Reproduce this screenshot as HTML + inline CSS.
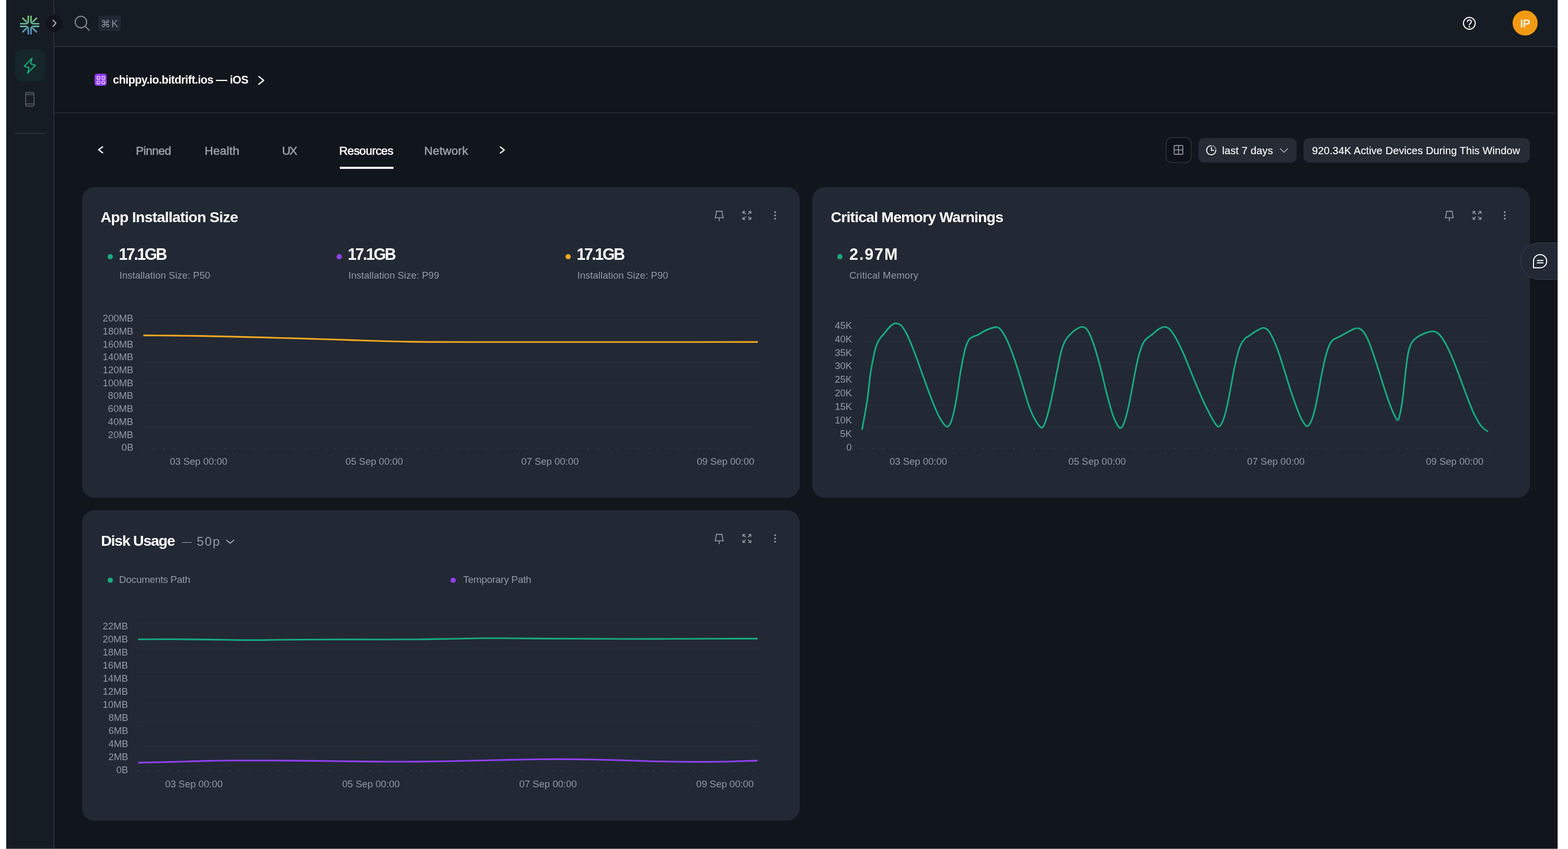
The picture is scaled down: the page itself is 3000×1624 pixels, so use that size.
<!DOCTYPE html>
<html lang="en"><head><meta charset="utf-8"><title>bitdrift - Resources</title>
<style>
*{box-sizing:border-box}
html,body{margin:0;padding:0}
body{width:3000px;height:1624px;overflow:hidden;background:#fff;font-family:'Liberation Sans',Arial,Helvetica,sans-serif;-webkit-font-smoothing:antialiased}
#app{position:absolute;left:12px;top:0;width:2968px;height:1623px;background:#11151c;overflow:hidden;will-change:transform;box-shadow:0 0 1.6px rgba(0,0,0,.6)}
#app div,#app aside,#app header,#app main,#app nav,#app section,#app button,#app span.t,#app svg.i,#app a{position:absolute;display:block;margin:0;padding:0}
#app button{border:0;background:none;font:inherit;color:inherit}
span.t{white-space:pre;font-kerning:normal}
svg.i{overflow:visible}
.edge{position:absolute;left:12px;top:1622.6px;width:2968px;height:1.4px;background:#707379}
.card{background:#222934;border-radius:24px}
.ico{fill:none;stroke:#9aa1a9;stroke-width:1.6;stroke-linecap:round;stroke-linejoin:round}
</style></head>
<body>
<div id="app">
<aside class="sidebar" style="left:0px;top:0px;width:91px;height:1623px;background:#161c23;border-right:2px solid #272e38;width:92px"><svg class="i" style="left:22px;top:26px" width="46" height="44" viewBox="34 26 46 44" ><defs><linearGradient id="lg" gradientUnits="userSpaceOnUse" x1="0" y1="29" x2="0" y2="67"><stop offset="0" stop-color="#86cf74"/><stop offset=".45" stop-color="#63b59a"/><stop offset="1" stop-color="#5a8ad6"/></linearGradient></defs><path d="M54.10 29.95V39.95Q54.10 45.35 48.70 45.35H38.20M42.70 34.05L51.10 42.25M54.10 65.95V55.95Q54.10 50.55 48.70 50.55H38.20M42.70 61.85L51.10 53.65M59.30 29.95V39.95Q59.30 45.35 64.70 45.35H75.20M70.70 34.05L62.30 42.25M59.30 65.95V55.95Q59.30 50.55 64.70 50.55H75.20M70.70 61.85L62.30 53.65" fill="none" stroke="url(#lg)" stroke-width="2.9"/></svg>
<div class="nav-active" style="left:16.5px;top:95px;width:57.5px;height:59.5px;background:#16272b;border-radius:14px"></div>
<svg class="i" style="left:28px;top:105px" width="34" height="42" viewBox="40 105 34 42" ><path d="M61.3 111.5L46.5 126.6L55.7 129.6L52.7 140.1L67.7 124.7L58.5 121.9Z" fill="none" stroke="#18ab80" stroke-width="2.2" stroke-linejoin="round"/></svg>
<svg class="i" style="left:32px;top:172px" width="26" height="36" viewBox="44 172 26 36" ><g fill="none" stroke="#50565f" stroke-width="2"><rect x="49.1" y="177" width="15.9" height="25.9" rx="2.8"/><path d="M49.1 180.8H65M49.1 198.7H65"/></g></svg>
<div style="left:16px;top:254px;width:59px;height:2px;background:#2a303a"></div>
</aside>
<header class="topbar" style="left:92px;top:0px;width:2876px;height:90px;background:#161c23;border-bottom:2px solid #2a303a"><svg class="i" style="left:36px;top:28px" width="36" height="36" viewBox="140 28 36 36" ><g fill="none" stroke="#7f858e" stroke-width="2.2" stroke-linecap="round"><circle cx="154.85" cy="42.2" r="11"/><path d="M162.8 50.1L170.6 58"/></g></svg>
<div class="kbd" style="left:83.7px;top:30.4px;width:43.3px;height:28.8px;background:#222833;border-radius:3.5px;border-bottom:1.2px solid #2a313b"><span class="t" style="left:5.20px;top:6.6px;font-size:18.5px;line-height:18.5px;color:#8a9099;font-family:'DejaVu Sans', 'Liberation Sans', sans-serif">⌘</span><span class="t" style="left:25.20px;top:4.6px;font-size:20px;line-height:20px;color:#8a9099">K</span></div>
<svg class="i" style="left:2693px;top:30px" width="30" height="30" viewBox="2797 30 30 30" ><g fill="none" stroke="#fff" stroke-width="2" stroke-linecap="round"><circle cx="2811.2" cy="44.6" r="11.3"/><path d="M2807.6 41.6a3.7 3.7 0 1 1 5.6 3.2c-1.3.8-2 1.5-2 2.9"/></g><circle cx="2811.2" cy="51.2" r="1.5" fill="#fff"/></svg>
<div class="avatar" style="left:2790px;top:20.3px;width:48px;height:48px;background:#f39a13;border-radius:50%"><span class="t" style="left:14.20px;top:13.7px;font-size:21px;line-height:21px;color:#ffffff;-webkit-text-stroke:0.6px">IP</span></div>
</header>
<button class="collapse" style="left:75.9px;top:28.1px;width:32.6px;height:32.6px;background:#11141a;border-radius:50%"><svg class="i" style="left:0px;top:0px" width="32.6" height="32.6" viewBox="87.9 28.1 32.6 32.6" ><path d="M101.3 38.6L106.9 44.65L101.3 50.7" fill="none" stroke="#a4a8af" stroke-width="2.2" stroke-linecap="round" stroke-linejoin="round"/></svg>
</button>
<div class="approw" style="left:92px;top:90px;width:2876px;height:127px;border-bottom:2px solid #262b34"><div class="appicon" style="left:76.6px;top:50.6px;width:23.8px;height:23.8px;background:#8f3ff2;border-radius:4.5px"><svg class="i" style="left:0px;top:0px" width="23.8" height="23.8" viewBox="180.6 140.6 23.8 23.8" ><g fill="none" stroke="#f6d9ff" stroke-width="1.4"><rect x="185.3" y="145.9" width="5.2" height="5.2" rx=".8"/><rect x="185.3" y="154.7" width="5.2" height="5.2" rx=".8"/><rect x="194.7" y="145.9" width="5.2" height="5.2" rx=".8"/><rect x="194.7" y="154.7" width="5.2" height="5.2" rx=".8"/></g></svg>
</div>
<span class="t" style="left:112.00px;top:53px;font-size:21.5px;line-height:21.5px;color:#ffffff;font-weight:700;letter-spacing:-0.544px">chippy.io.bitdrift.ios — iOS</span><svg class="i" style="left:384px;top:50px" width="24" height="28" viewBox="488 140 24 28" ><path d="M495.2 146.4L504.6 153.7L495.2 161" fill="none" stroke="#ffffff" stroke-width="2.4" stroke-linecap="round" stroke-linejoin="round"/></svg>
</div>
<nav class="tabs" style="left:92px;top:217px;width:2876px;height:140px;"><svg class="i" style="left:76px;top:55px" width="26" height="30" viewBox="180 272 26 30" ><path d="M196.2 280.9L188.8 286.5L196.2 292.1" fill="none" stroke="#eceded" stroke-width="2.6" stroke-linecap="round" stroke-linejoin="round"/></svg>
<span class="t" style="left:156.10px;top:61px;font-size:22.6px;line-height:22.6px;color:#9aa1a9;letter-spacing:-0.560px;-webkit-text-stroke:0.6px">Pinned</span><span class="t" style="left:287.50px;top:61px;font-size:22.6px;line-height:22.6px;color:#9aa1a9;letter-spacing:0.220px;-webkit-text-stroke:0.6px">Health</span><span class="t" style="left:435.60px;top:61px;font-size:22.6px;line-height:22.6px;color:#9aa1a9;letter-spacing:-2.100px;-webkit-text-stroke:0.6px">UX</span><span class="t" style="left:545.10px;top:61px;font-size:22.6px;line-height:22.6px;color:#ffffff;letter-spacing:-0.550px;-webkit-text-stroke:0.6px">Resources</span><div style="left:546px;top:102px;width:102.8px;height:4px;background:#fff;border-radius:1px"></div>
<span class="t" style="left:707.60px;top:61px;font-size:22.6px;line-height:22.6px;color:#9aa1a9;letter-spacing:0.167px;-webkit-text-stroke:0.6px">Network</span><svg class="i" style="left:844px;top:55px" width="26" height="30" viewBox="948 272 26 30" ><path d="M957.5 281.3L964.7 287L957.5 292.7" fill="none" stroke="#eceded" stroke-width="2.6" stroke-linecap="round" stroke-linejoin="round"/></svg>
<button class="btn-grid" style="left:2126.2px;top:45.2px;width:50.2px;height:50.2px;border:2px solid #272c35;border-radius:12px;background:#0e1118"><svg class="i" style="left:13.2px;top:13.1px" width="21" height="21" viewBox="0 0 21 21"><g fill="none" stroke="#9aa1a9" stroke-width="1.6"><rect x="1.4" y="1.4" width="16.7" height="16.7" rx="1"/><path d="M9.75 1.4V18.1M1.4 9.75H18.1"/></g></svg></button>
<button class="btn-range" style="left:2189px;top:46.5px;width:187.9px;height:47.6px;background:#262b35;border-radius:11.5px"><svg class="i" style="left:12px;top:11.5px" width="26" height="26" viewBox="2305 275 26 26" ><g fill="none" stroke="#fff" stroke-width="1.9" stroke-linecap="round"><path d="M2317.4 278.6a8.8 8.8 0 1 0 8.8 8.8"/><path d="M2317.7 282V287.6H2322.4"/></g><g fill="#fff"><circle cx="2320.9" cy="279.2" r="1.05"/><circle cx="2323.9" cy="281.3" r="1.05"/><circle cx="2325.7" cy="284.3" r="1.05"/></g></svg>
<span class="t" style="left:45.30px;top:14.5px;font-size:20px;line-height:20px;color:#f4f5f6;letter-spacing:0.150px;-webkit-text-stroke:0.2px">last 7 days</span><svg class="i" style="left:151px;top:14.5px" width="26" height="20" viewBox="2444 278 26 20" ><path d="M2449.2 284.2L2456.5 291.3L2463.8 284.2" fill="none" stroke="#9aa1a9" stroke-width="1.8" stroke-linecap="round" stroke-linejoin="round"/></svg>
</button>
<div class="pill" style="left:2389.8px;top:46.5px;width:432.8px;height:47.6px;background:#262b35;border-radius:11.5px"><span class="t" style="left:16.50px;top:14.5px;font-size:20px;line-height:20px;color:#f4f5f6;letter-spacing:0.090px;-webkit-text-stroke:0.2px">920.34K Active Devices During This Window</span></div>
</nav>
<section class="card" style="left:145px;top:358px;width:1373px;height:594px;"><span class="t" style="left:35.40px;top:43px;font-size:28.5px;line-height:28.5px;color:#ffffff;font-weight:700;letter-spacing:-0.765px">App Installation Size</span><svg class="i" style="left:1207px;top:42px" width="24" height="26" viewBox="1364 400 24 26" ><path class="ico" d="M1369.6 404.1H1382.4M1370.9 404.1L1368.7 416.5M1381.1 404.1L1383.3 416.5M1367.3 416.5H1384.7M1376.0 416.5V422.9" style="stroke-linecap:butt;stroke-linejoin:miter"/></svg>
<svg class="i" style="left:1260.3px;top:42.2px" width="24" height="24" viewBox="1417.3 400.2 24 24" ><path class="ico" d="M1427.1 410.0L1421.8 404.7M1426.4 404.7H1421.8V409.3M1427.1 414.4L1421.8 419.7M1426.4 419.7H1421.8V415.1M1431.5 410.0L1436.8 404.7M1432.2 404.7H1436.8V409.3M1431.5 414.4L1436.8 419.7M1432.2 419.7H1436.8V415.1" style="stroke-linecap:butt;stroke-linejoin:miter"/></svg>
<svg class="i" style="left:1319.8px;top:42.05px" width="12" height="24" viewBox="1476.8 400.05 12 24" ><circle cx="1482.8" cy="405.80" r="1.65" fill="#9aa1a9"/><circle cx="1482.8" cy="412.05" r="1.65" fill="#9aa1a9"/><circle cx="1482.8" cy="418.30" r="1.65" fill="#9aa1a9"/></svg>
<div class="dot" style="left:48.6px;top:127.9px;width:10px;height:10px;background:#18ab80;border-radius:50%"></div>
<span class="t" style="left:70.30px;top:113px;font-size:30.5px;line-height:30.5px;color:#ffffff;font-weight:700;letter-spacing:-2.460px">17.1GB</span><span class="t" style="left:71.50px;top:160px;font-size:18.5px;line-height:18.5px;color:#919aa5;letter-spacing:0.052px">Installation Size: P50</span><div class="dot" style="left:486.6px;top:127.9px;width:10px;height:10px;background:#9340f5;border-radius:50%"></div>
<span class="t" style="left:508.30px;top:113px;font-size:30.5px;line-height:30.5px;color:#ffffff;font-weight:700;letter-spacing:-2.460px">17.1GB</span><span class="t" style="left:509.50px;top:160px;font-size:18.5px;line-height:18.5px;color:#919aa5;letter-spacing:0.043px">Installation Size: P99</span><div class="dot" style="left:924.6px;top:127.9px;width:10px;height:10px;background:#f3a922;border-radius:50%"></div>
<span class="t" style="left:946.30px;top:113px;font-size:30.5px;line-height:30.5px;color:#ffffff;font-weight:700;letter-spacing:-2.460px">17.1GB</span><span class="t" style="left:947.50px;top:160px;font-size:18.5px;line-height:18.5px;color:#919aa5;letter-spacing:0.052px">Installation Size: P90</span><svg class="i" style="left:0px;top:232px" width="1373" height="290" viewBox="157 590 1373 290" ><path d="M274 611.40H1452" stroke="#29313b" stroke-width="1.2" fill="none"/><path d="M274 692.80H1452" stroke="#29313b" stroke-width="1.2" fill="none"/><path d="M274 734.00H1452" stroke="#29313b" stroke-width="1.2" fill="none"/><path d="M274 775.20H1452" stroke="#29313b" stroke-width="1.2" fill="none"/><path d="M274 817.00H1452" stroke="#29313b" stroke-width="1.2" fill="none"/><path d="M274.4 857.80H1435" stroke="#47505a" stroke-width="1.6" stroke-dasharray="1.6 17.71" fill="none"/><path d="M274.2 641.6C283.5 641.6 311.9 641.7 330.0 641.9C348.1 642.1 364.7 642.3 383.0 642.6C401.3 642.9 420.5 643.4 440.0 643.9C459.5 644.4 480.0 644.9 500.0 645.4C520.0 645.9 540.7 646.5 560.0 647.0C579.3 647.5 596.8 648.1 616.0 648.7C635.2 649.3 655.5 650.0 675.0 650.6C694.5 651.2 715.5 652.0 733.0 652.5C750.5 653.0 765.5 653.3 780.0 653.6C794.5 653.9 800.0 654.0 820.0 654.1C840.0 654.2 853.3 654.2 900.0 654.2C946.7 654.2 1033.3 654.2 1100.0 654.2C1166.7 654.2 1241.7 654.2 1300.0 654.2C1358.3 654.2 1425.0 654.1 1450.0 654.1" fill="none" stroke="#f3a922" stroke-width="3.1" stroke-linejoin="round"/></svg>
<span class="t ax" style="left:39.60px;top:242px;font-size:18.5px;line-height:18.5px;color:#919aa5">200MB</span><span class="t ax" style="left:39.60px;top:267px;font-size:18.5px;line-height:18.5px;color:#919aa5">180MB</span><span class="t ax" style="left:39.60px;top:292px;font-size:18.5px;line-height:18.5px;color:#919aa5">160MB</span><span class="t ax" style="left:39.60px;top:316px;font-size:18.5px;line-height:18.5px;color:#919aa5">140MB</span><span class="t ax" style="left:39.60px;top:341px;font-size:18.5px;line-height:18.5px;color:#919aa5">120MB</span><span class="t ax" style="left:39.60px;top:366px;font-size:18.5px;line-height:18.5px;color:#919aa5">100MB</span><span class="t ax" style="left:49.60px;top:390px;font-size:18.5px;line-height:18.5px;color:#919aa5">80MB</span><span class="t ax" style="left:49.60px;top:415px;font-size:18.5px;line-height:18.5px;color:#919aa5">60MB</span><span class="t ax" style="left:49.60px;top:440px;font-size:18.5px;line-height:18.5px;color:#919aa5">40MB</span><span class="t ax" style="left:49.60px;top:465px;font-size:18.5px;line-height:18.5px;color:#919aa5">20MB</span><span class="t ax" style="left:75.60px;top:489px;font-size:18.5px;line-height:18.5px;color:#919aa5">0B</span><span class="t ax" style="left:168.00px;top:516px;font-size:18.5px;line-height:18.5px;color:#919aa5">03 Sep 00:00</span><span class="t ax" style="left:504.10px;top:516px;font-size:18.5px;line-height:18.5px;color:#919aa5">05 Sep 00:00</span><span class="t ax" style="left:840.20px;top:516px;font-size:18.5px;line-height:18.5px;color:#919aa5">07 Sep 00:00</span><span class="t ax" style="left:1176.20px;top:516px;font-size:18.5px;line-height:18.5px;color:#919aa5">09 Sep 00:00</span></section>
<section class="card" style="left:1542px;top:358px;width:1373px;height:594px;"><span class="t" style="left:35.60px;top:43px;font-size:28.5px;line-height:28.5px;color:#ffffff;font-weight:700;letter-spacing:-0.874px">Critical Memory Warnings</span><svg class="i" style="left:1206.6px;top:42px" width="24" height="26" viewBox="2760.6 400 24 26" ><path class="ico" d="M2766.2 404.1H2779.0M2767.5 404.1L2765.3 416.5M2777.7 404.1L2779.9 416.5M2763.9 416.5H2781.3M2772.6 416.5V422.9" style="stroke-linecap:butt;stroke-linejoin:miter"/></svg>
<svg class="i" style="left:1259.9px;top:42.2px" width="24" height="24" viewBox="2813.9 400.2 24 24" ><path class="ico" d="M2823.7 410.0L2818.4 404.7M2823.0 404.7H2818.4V409.3M2823.7 414.4L2818.4 419.7M2823.0 419.7H2818.4V415.1M2828.1 410.0L2833.4 404.7M2828.8 404.7H2833.4V409.3M2828.1 414.4L2833.4 419.7M2828.8 419.7H2833.4V415.1" style="stroke-linecap:butt;stroke-linejoin:miter"/></svg>
<svg class="i" style="left:1319.4px;top:42.05px" width="12" height="24" viewBox="2873.4 400.05 12 24" ><circle cx="2879.4" cy="405.80" r="1.65" fill="#9aa1a9"/><circle cx="2879.4" cy="412.05" r="1.65" fill="#9aa1a9"/><circle cx="2879.4" cy="418.30" r="1.65" fill="#9aa1a9"/></svg>
<div class="dot" style="left:48.2px;top:127.8px;width:10px;height:10px;background:#18ab80;border-radius:50%"></div>
<span class="t" style="left:71.10px;top:113px;font-size:30.5px;line-height:30.5px;color:#ffffff;font-weight:700;letter-spacing:1.875px">2.97M</span><span class="t" style="left:71.00px;top:160px;font-size:18.5px;line-height:18.5px;color:#919aa5;letter-spacing:0.257px">Critical Memory</span><svg class="i" style="left:0px;top:232px" width="1373" height="290" viewBox="1554 590 1373 290" ><path d="M1650 611.40H2849.5" stroke="#29313b" stroke-width="1.2" fill="none"/><path d="M1650 653.40H2849.5" stroke="#29313b" stroke-width="1.2" fill="none"/><path d="M1650 692.80H2849.5" stroke="#29313b" stroke-width="1.2" fill="none"/><path d="M1650 734.00H2849.5" stroke="#29313b" stroke-width="1.2" fill="none"/><path d="M1650 775.20H2849.5" stroke="#29313b" stroke-width="1.2" fill="none"/><path d="M1650 817.00H2849.5" stroke="#29313b" stroke-width="1.2" fill="none"/><path d="M1649.4 857.80H2849" stroke="#47505a" stroke-width="1.6" stroke-dasharray="1.6 17.71" fill="none"/><path d="M1649.3 822.0C1651.0 812.5 1656.8 782.3 1659.4 764.7C1662.1 747.1 1663.2 729.8 1665.2 716.2C1667.2 702.6 1669.3 691.9 1671.1 683.2C1672.9 674.5 1674.1 669.3 1675.9 663.8C1677.7 658.3 1679.0 654.7 1681.7 650.2C1684.5 645.7 1689.0 641.1 1692.4 637.0C1695.8 632.9 1699.6 628.1 1702.1 625.4C1704.6 622.7 1705.5 622.0 1707.5 620.8C1709.5 619.6 1711.1 618.2 1713.8 618.4C1716.5 618.6 1720.0 618.5 1723.5 622.0C1727.0 625.5 1730.9 631.2 1735.1 639.5C1739.3 647.8 1743.8 659.0 1748.7 671.5C1753.6 684.0 1759.0 700.0 1764.2 714.2C1769.4 728.4 1775.0 744.3 1779.8 756.9C1784.6 769.5 1789.4 781.5 1793.3 789.9C1797.2 798.3 1799.9 803.0 1803.0 807.4C1806.1 811.8 1809.2 815.8 1811.8 816.1C1814.4 816.4 1816.3 814.3 1818.6 809.3C1820.9 804.3 1823.3 795.0 1825.4 786.0C1827.5 777.0 1829.4 765.7 1831.2 755.0C1833.0 744.3 1834.2 733.0 1836.0 722.0C1837.8 711.0 1840.0 698.7 1841.9 689.0C1843.9 679.3 1845.8 670.3 1847.7 663.8C1849.6 657.3 1851.6 653.3 1853.5 650.2C1855.4 647.1 1856.4 646.9 1859.3 645.3C1862.2 643.7 1866.2 642.9 1871.0 640.5C1875.8 638.1 1882.6 633.2 1888.4 630.8C1894.2 628.4 1901.4 625.8 1905.9 625.9C1910.4 626.0 1912.0 627.3 1915.6 631.7C1919.2 636.1 1923.1 642.9 1927.3 652.1C1931.5 661.3 1936.4 674.0 1940.9 687.0C1945.4 700.0 1949.9 715.2 1954.4 729.8C1958.9 744.4 1963.8 762.4 1968.0 774.4C1972.2 786.4 1975.7 794.3 1979.7 801.6C1983.8 808.9 1989.1 816.7 1992.3 818.0C1995.5 819.3 1996.7 814.9 1999.1 809.3C2001.5 803.6 2004.2 794.1 2006.8 784.1C2009.4 774.1 2012.0 761.5 2014.6 749.2C2017.2 736.9 2019.8 722.9 2022.4 710.3C2025.0 697.7 2027.5 683.2 2030.1 673.5C2032.7 663.8 2035.0 657.8 2037.9 652.1C2040.8 646.4 2044.0 643.2 2047.6 639.5C2051.2 635.8 2055.4 632.2 2059.3 629.8C2063.2 627.4 2067.4 625.0 2070.9 625.3C2074.4 625.6 2077.0 626.3 2080.6 631.7C2084.2 637.1 2088.1 645.8 2092.3 657.9C2096.5 670.0 2101.6 688.6 2105.8 704.5C2110.0 720.4 2113.6 738.1 2117.5 753.0C2121.4 767.9 2125.9 784.1 2129.1 793.8C2132.3 803.5 2134.5 807.1 2136.9 811.3C2139.3 815.5 2141.4 819.3 2143.7 819.0C2146.0 818.7 2148.1 815.4 2150.5 809.3C2152.9 803.2 2155.6 793.2 2158.2 782.2C2160.8 771.2 2163.6 755.9 2166.0 743.3C2168.4 730.7 2170.5 717.5 2172.8 706.5C2175.1 695.5 2177.3 685.4 2179.6 677.3C2181.9 669.2 2184.1 662.8 2186.4 657.9C2188.7 653.0 2190.1 651.3 2193.2 648.2C2196.3 645.1 2200.9 642.6 2204.8 639.5C2208.7 636.4 2212.6 632.2 2216.5 629.8C2220.4 627.4 2224.5 625.3 2228.1 625.3C2231.7 625.3 2234.2 626.3 2237.8 629.8C2241.4 633.3 2245.3 639.0 2249.5 646.3C2253.7 653.6 2258.5 663.5 2263.0 673.5C2267.5 683.5 2272.1 695.5 2276.6 706.5C2281.1 717.5 2285.7 728.8 2290.2 739.5C2294.7 750.2 2299.6 761.5 2303.8 770.5C2308.0 779.5 2312.3 787.6 2315.5 793.8C2318.7 799.9 2320.6 803.7 2323.2 807.4C2325.8 811.1 2328.4 816.1 2331.0 816.1C2333.6 816.1 2336.1 813.0 2338.7 807.4C2341.3 801.8 2343.9 792.9 2346.5 782.2C2349.1 771.5 2351.9 755.9 2354.3 743.3C2356.7 730.7 2358.8 717.5 2361.1 706.5C2363.4 695.5 2365.8 685.1 2367.9 677.3C2370.0 669.5 2371.4 664.8 2373.7 659.9C2375.9 655.0 2378.8 651.1 2381.4 648.2C2384.0 645.4 2385.6 645.2 2389.2 642.8C2392.8 640.4 2398.3 636.3 2402.8 633.7C2407.3 631.1 2412.5 627.6 2416.4 627.3C2420.3 627.0 2422.9 628.2 2426.1 631.7C2429.3 635.2 2432.2 640.6 2435.8 648.2C2439.4 655.8 2443.5 666.3 2447.4 677.3C2451.3 688.3 2455.2 701.9 2459.1 714.2C2463.0 726.5 2467.1 740.4 2470.7 751.1C2474.2 761.8 2477.2 769.9 2480.4 778.3C2483.6 786.7 2486.8 795.5 2490.1 801.6C2493.4 807.8 2497.1 814.2 2500.0 815.2C2502.9 816.2 2505.2 812.6 2507.8 807.4C2510.4 802.2 2513.1 793.5 2515.5 784.1C2517.9 774.7 2520.0 762.8 2522.3 751.1C2524.6 739.5 2526.8 725.5 2529.1 714.2C2531.4 702.9 2533.6 691.9 2535.9 683.2C2538.2 674.5 2540.3 667.3 2542.7 661.8C2545.1 656.3 2547.3 653.1 2550.5 650.2C2553.7 647.3 2557.6 646.7 2562.1 644.3C2566.6 641.9 2573.1 638.0 2577.6 635.6C2582.1 633.2 2585.9 631.1 2589.3 629.8C2592.7 628.5 2595.1 627.3 2598.0 627.8C2600.9 628.3 2603.7 629.3 2606.8 632.7C2609.9 636.1 2613.3 641.4 2616.5 648.2C2619.7 655.0 2623.0 664.4 2626.2 673.5C2629.4 682.6 2632.7 692.6 2635.9 702.6C2639.1 712.6 2642.4 723.6 2645.6 733.6C2648.8 743.6 2652.1 753.6 2655.3 762.7C2658.5 771.8 2661.9 781.2 2665.0 788.0C2668.1 794.8 2671.4 802.9 2673.7 803.5C2676.0 804.1 2677.0 798.4 2678.6 791.9C2680.2 785.4 2681.9 775.1 2683.4 764.7C2684.9 754.4 2686.0 741.4 2687.3 729.8C2688.6 718.1 2689.8 705.2 2691.2 694.8C2692.6 684.4 2694.2 674.4 2696.0 667.6C2697.8 660.8 2699.6 657.7 2701.9 654.1C2704.2 650.5 2706.1 648.9 2709.6 646.3C2713.1 643.7 2718.0 640.6 2723.2 638.5C2728.4 636.4 2735.8 633.7 2740.7 633.7C2745.5 633.7 2748.4 635.1 2752.3 638.5C2756.2 641.9 2760.1 647.6 2764.0 654.1C2767.9 660.6 2771.7 668.6 2775.6 677.3C2779.5 686.0 2783.4 696.5 2787.3 706.5C2791.2 716.5 2795.0 727.1 2798.9 737.5C2802.8 747.9 2807.0 759.5 2810.6 768.6C2814.2 777.7 2817.1 785.1 2820.3 791.9C2823.5 798.7 2827.1 804.8 2830.0 809.3C2832.9 813.8 2834.9 816.3 2837.7 819.0C2840.5 821.7 2845.4 824.3 2846.9 825.4" fill="none" stroke="#18ab80" stroke-width="3.1" stroke-linejoin="round"/></svg>
<span class="t ax" style="left:43.20px;top:256px;font-size:18.5px;line-height:18.5px;color:#919aa5">45K</span><span class="t ax" style="left:43.20px;top:282px;font-size:18.5px;line-height:18.5px;color:#919aa5">40K</span><span class="t ax" style="left:43.20px;top:308px;font-size:18.5px;line-height:18.5px;color:#919aa5">35K</span><span class="t ax" style="left:43.20px;top:333px;font-size:18.5px;line-height:18.5px;color:#919aa5">30K</span><span class="t ax" style="left:43.20px;top:359px;font-size:18.5px;line-height:18.5px;color:#919aa5">25K</span><span class="t ax" style="left:43.20px;top:385px;font-size:18.5px;line-height:18.5px;color:#919aa5">20K</span><span class="t ax" style="left:43.20px;top:411px;font-size:18.5px;line-height:18.5px;color:#919aa5">15K</span><span class="t ax" style="left:43.20px;top:437px;font-size:18.5px;line-height:18.5px;color:#919aa5">10K</span><span class="t ax" style="left:53.20px;top:463px;font-size:18.5px;line-height:18.5px;color:#919aa5">5K</span><span class="t ax" style="left:65.20px;top:489px;font-size:18.5px;line-height:18.5px;color:#919aa5">0</span><span class="t ax" style="left:148.00px;top:516px;font-size:18.5px;line-height:18.5px;color:#919aa5">03 Sep 00:00</span><span class="t ax" style="left:490.10px;top:516px;font-size:18.5px;line-height:18.5px;color:#919aa5">05 Sep 00:00</span><span class="t ax" style="left:832.10px;top:516px;font-size:18.5px;line-height:18.5px;color:#919aa5">07 Sep 00:00</span><span class="t ax" style="left:1174.20px;top:516px;font-size:18.5px;line-height:18.5px;color:#919aa5">09 Sep 00:00</span></section>
<section class="card" style="left:145px;top:976px;width:1373px;height:594px;"><span class="t" style="left:36.20px;top:44px;font-size:28.5px;line-height:28.5px;color:#ffffff;font-weight:700;letter-spacing:-1.289px">Disk Usage</span><span class="t" style="left:191.30px;top:51px;font-size:18.2px;line-height:18.2px;color:#919aa5">—</span><span class="t" style="left:219.50px;top:48px;font-size:24px;line-height:24px;color:#919aa5;letter-spacing:1.900px">50p</span><svg class="i" style="left:271px;top:50px" width="24" height="20" viewBox="428 1026 24 20" ><path d="M433.4 1033.2L440.3 1039.1L447.2 1033.2" fill="none" stroke="#97a0ab" stroke-width="2.1" stroke-linecap="round" stroke-linejoin="round"/></svg>
<svg class="i" style="left:1207px;top:41.6px" width="24" height="26" viewBox="1364 1017.6 24 26" ><path class="ico" d="M1369.6 1021.7H1382.4M1370.9 1021.7L1368.7 1034.1M1381.1 1021.7L1383.3 1034.1M1367.3 1034.1H1384.7M1376.0 1034.1V1040.5" style="stroke-linecap:butt;stroke-linejoin:miter"/></svg>
<svg class="i" style="left:1260.3px;top:41.8px" width="24" height="24" viewBox="1417.3 1017.8 24 24" ><path class="ico" d="M1427.1 1027.6L1421.8 1022.3M1426.4 1022.3H1421.8V1026.9M1427.1 1032.0L1421.8 1037.3M1426.4 1037.3H1421.8V1032.7M1431.5 1027.6L1436.8 1022.3M1432.2 1022.3H1436.8V1026.9M1431.5 1032.0L1436.8 1037.3M1432.2 1037.3H1436.8V1032.7" style="stroke-linecap:butt;stroke-linejoin:miter"/></svg>
<svg class="i" style="left:1319.8px;top:41.65px" width="12" height="24" viewBox="1476.8 1017.65 12 24" ><circle cx="1482.8" cy="1023.40" r="1.65" fill="#9aa1a9"/><circle cx="1482.8" cy="1029.65" r="1.65" fill="#9aa1a9"/><circle cx="1482.8" cy="1035.90" r="1.65" fill="#9aa1a9"/></svg>
<div class="dot" style="left:48.6px;top:128.7px;width:10px;height:10px;background:#18ab80;border-radius:50%"></div>
<span class="t" style="left:70.80px;top:123px;font-size:19px;line-height:19px;color:#919aa5;letter-spacing:-0.308px">Documents Path</span><div class="dot" style="left:705.4px;top:128.6px;width:10px;height:10px;background:#9340f5;border-radius:50%"></div>
<span class="t" style="left:729.20px;top:123px;font-size:19px;line-height:19px;color:#919aa5;letter-spacing:-0.285px">Temporary Path</span><svg class="i" style="left:0px;top:199px" width="1373" height="320" viewBox="157 1175 1373 320" ><path d="M264 1193.00H1452" stroke="#29313b" stroke-width="1.2" fill="none"/><path d="M264 1240.00H1452" stroke="#29313b" stroke-width="1.2" fill="none"/><path d="M264 1286.40H1452" stroke="#29313b" stroke-width="1.2" fill="none"/><path d="M264 1333.80H1452" stroke="#29313b" stroke-width="1.2" fill="none"/><path d="M264 1380.60H1452" stroke="#29313b" stroke-width="1.2" fill="none"/><path d="M264 1427.00H1452" stroke="#29313b" stroke-width="1.2" fill="none"/><path d="M264.2 1474.60H1444" stroke="#47505a" stroke-width="1.6" stroke-dasharray="1.6 17.71" fill="none"/><path d="M264.2 1223.0C275.2 1223.0 307.4 1222.7 330.0 1222.8C352.6 1222.9 376.7 1223.1 400.0 1223.4C423.3 1223.7 446.7 1224.3 470.0 1224.4C493.3 1224.5 515.0 1224.0 540.0 1223.8C565.0 1223.6 590.0 1223.3 620.0 1223.2C650.0 1223.1 690.0 1223.2 720.0 1223.2C750.0 1223.2 775.0 1223.2 800.0 1223.0C825.0 1222.8 848.3 1222.2 870.0 1221.8C891.7 1221.4 910.8 1220.9 930.0 1220.8C949.2 1220.7 965.0 1220.9 985.0 1221.0C1005.0 1221.1 1025.8 1221.4 1050.0 1221.6C1074.2 1221.8 1103.7 1221.8 1130.0 1221.9C1156.3 1222.0 1179.7 1222.2 1208.0 1222.2C1236.3 1222.2 1271.3 1222.1 1300.0 1222.0C1328.7 1221.9 1355.1 1221.8 1380.0 1221.7C1404.9 1221.6 1438.0 1221.6 1449.6 1221.6" fill="none" stroke="#18ab80" stroke-width="3.1"/><path d="M264.2 1458.9C275.2 1458.7 309.0 1458.0 330.0 1457.4C351.0 1456.9 370.2 1456.0 390.0 1455.6C409.8 1455.1 427.3 1454.8 449.0 1454.7C470.7 1454.6 494.8 1454.7 520.0 1454.8C545.2 1454.9 573.3 1455.1 600.0 1455.4C626.7 1455.7 656.7 1456.1 680.0 1456.4C703.3 1456.7 720.0 1456.9 740.0 1457.0C760.0 1457.1 778.3 1457.1 800.0 1456.9C821.7 1456.7 846.7 1456.2 870.0 1455.8C893.3 1455.3 916.7 1454.7 940.0 1454.2C963.3 1453.7 988.0 1453.1 1010.0 1452.7C1032.0 1452.3 1052.0 1452.1 1072.0 1452.1C1092.0 1452.1 1110.3 1452.4 1130.0 1452.8C1149.7 1453.2 1170.0 1453.8 1190.0 1454.4C1210.0 1455.0 1229.0 1455.7 1250.0 1456.2C1271.0 1456.7 1294.3 1457.2 1316.0 1457.3C1337.7 1457.4 1357.7 1457.4 1380.0 1457.0C1402.3 1456.6 1438.0 1455.2 1449.6 1454.9" fill="none" stroke="#9340f5" stroke-width="3.1"/></svg>
<span class="t ax" style="left:39.40px;top:213px;font-size:18.5px;line-height:18.5px;color:#919aa5">22MB</span><span class="t ax" style="left:39.40px;top:238px;font-size:18.5px;line-height:18.5px;color:#919aa5">20MB</span><span class="t ax" style="left:39.40px;top:263px;font-size:18.5px;line-height:18.5px;color:#919aa5">18MB</span><span class="t ax" style="left:39.40px;top:288px;font-size:18.5px;line-height:18.5px;color:#919aa5">16MB</span><span class="t ax" style="left:39.40px;top:313px;font-size:18.5px;line-height:18.5px;color:#919aa5">14MB</span><span class="t ax" style="left:39.40px;top:338px;font-size:18.5px;line-height:18.5px;color:#919aa5">12MB</span><span class="t ax" style="left:39.40px;top:363px;font-size:18.5px;line-height:18.5px;color:#919aa5">10MB</span><span class="t ax" style="left:50.40px;top:388px;font-size:18.5px;line-height:18.5px;color:#919aa5">8MB</span><span class="t ax" style="left:50.40px;top:413px;font-size:18.5px;line-height:18.5px;color:#919aa5">6MB</span><span class="t ax" style="left:50.40px;top:438px;font-size:18.5px;line-height:18.5px;color:#919aa5">4MB</span><span class="t ax" style="left:50.40px;top:463px;font-size:18.5px;line-height:18.5px;color:#919aa5">2MB</span><span class="t ax" style="left:65.40px;top:488px;font-size:18.5px;line-height:18.5px;color:#919aa5">0B</span><span class="t ax" style="left:158.90px;top:515px;font-size:18.5px;line-height:18.5px;color:#919aa5">03 Sep 00:00</span><span class="t ax" style="left:497.80px;top:515px;font-size:18.5px;line-height:18.5px;color:#919aa5">05 Sep 00:00</span><span class="t ax" style="left:836.40px;top:515px;font-size:18.5px;line-height:18.5px;color:#919aa5">07 Sep 00:00</span><span class="t ax" style="left:1175.10px;top:515px;font-size:18.5px;line-height:18.5px;color:#919aa5">09 Sep 00:00</span></section>
<div class="gutter" style="left:2964px;top:90px;width:4px;height:1533px;background:#14161a"></div>
<button class="feedback" style="left:2897.3px;top:464px;width:90px;height:70.8px;background:#222934;border:1.6px solid #3c444f;border-radius:35.4px 0 0 35.4px"><svg class="i" style="left:20.7px;top:19px" width="32" height="32" viewBox="2930 483 32 32" ><g fill="none" stroke="#fff" stroke-width="2" stroke-linecap="round" stroke-linejoin="round"><path d="M2933 511.3V498.7a12.6 12.6 0 1 1 12.6 12.6Z"/><path d="M2940.3 497.3H2951.3M2940.3 501.8H2951.3"/></g></svg>
</button>
</div>
<div class="edge"></div>
</body></html>
